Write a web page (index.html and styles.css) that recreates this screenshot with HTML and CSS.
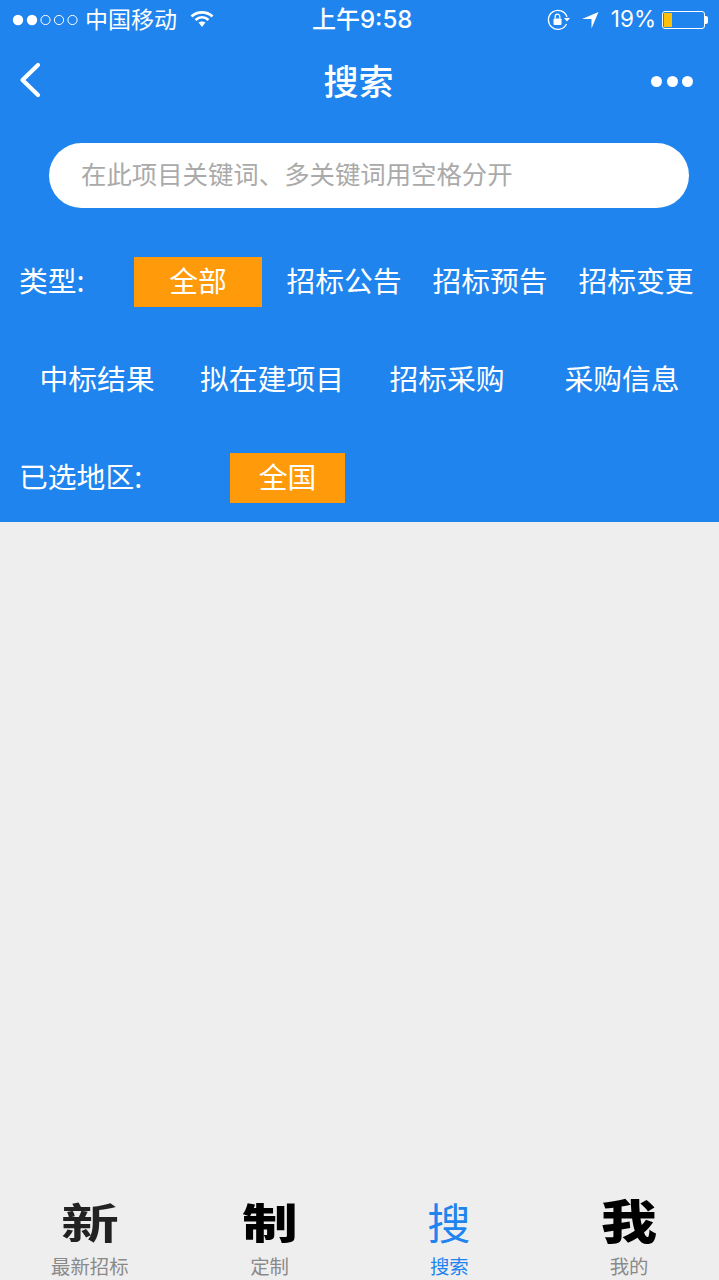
FILE: index.html
```html
<!DOCTYPE html>
<html lang="zh-CN">
<head>
<meta charset="utf-8">
<title>搜索</title>
<link rel="stylesheet" href="styles.css">
</head>
<body>
<div class="app">
  <header class="top">
    <div class="status">
      <div class="status-side">
        <svg class="signal" width="66" height="14" viewBox="0 0 66 14"><circle cx="6" cy="7" r="5.2" fill="#fff"/><circle cx="20" cy="7" r="5.2" fill="#fff"/><circle cx="33.500" cy="7" r="4.600" fill="none" stroke="#fff" stroke-width="1"/><circle cx="47" cy="7" r="4.600" fill="none" stroke="#fff" stroke-width="1"/><circle cx="60.500" cy="7" r="4.600" fill="none" stroke="#fff" stroke-width="1"/></svg>
        <span class="carrier">中国移动</span>
        <svg class="wifi" width="24" height="18" viewBox="0 0 24 18"><path d="M1.500 6.500C7.500 1 16.500 1 22.500 6.500" fill="none" stroke="#fff" stroke-width="2.800"/><path d="M5.500 10C9.500 6.500 14.500 6.500 18.500 10" fill="none" stroke="#fff" stroke-width="2.800"/><path d="M8.500 12.500C10.500 11 13.500 11 15.500 12.500L12 17Z" fill="#fff"/></svg>
      </div>
      <div class="clock">上午9:58</div>
      <div class="status-side">
        <svg class="lock" width="24" height="22" viewBox="0 0 24 22"><path d="M19.500 15A9.500 9.500 0 1 1 20 8" fill="none" stroke="#fff" stroke-width="1.300"/><path d="M17 9h6l-3 3.500Z" fill="#fff"/><rect x="6.500" y="9.500" width="8" height="6.500" rx="1" fill="#fff"/><path d="M8.200 9.500V7.500a2.300 2.300 0 0 1 4.600 0V9.500" fill="none" stroke="#fff" stroke-width="1.300"/></svg>
        <svg class="arrow" width="18" height="18" viewBox="0 0 18 18"><path d="M17.500 1L10.500 17.500V8H1Z" fill="#fff"/></svg>
        <span class="pct">19%</span>
        <div class="battery"><div class="battery-fill"></div></div>
      </div>
    </div>
    <nav class="nav">
      <svg class="back" width="24" height="36" viewBox="0 0 24 36"><path d="M20 3L4.500 18L20 33" fill="none" stroke="#fff" stroke-width="4.200" stroke-linecap="round" stroke-linejoin="round"/></svg>
      <h1 class="title">搜索</h1>
      <div class="more"><i></i><i></i><i></i></div>
    </nav>
    <div class="search"><span>在此项目关键词、多关键词用空格分开</span></div>
    <div class="filters">
      <div class="row">
        <span class="label label-type">类型:</span>
        <span class="chip chip-all">全部</span>
        <span class="opt">招标公告</span>
        <span class="opt">招标预告</span>
        <span class="opt">招标变更</span>
      </div>
      <div class="row row-more">
        <span class="cell">中标结果</span>
        <span class="cell">拟在建项目</span>
        <span class="cell">招标采购</span>
        <span class="cell">采购信息</span>
      </div>
      <div class="row">
        <span class="label label-area">已选地区:</span>
        <span class="chip chip-area">全国</span>
      </div>
    </div>
  </header>
  <main class="content"></main>
  <footer class="tabs">
    <div class="tab"><div class="glyph-box"><span class="glyph g-new">新</span></div><span class="tab-label">最新招标</span></div>
    <div class="tab"><div class="glyph-box"><span class="glyph g-make">制</span></div><span class="tab-label">定制</span></div>
    <div class="tab tab-active"><div class="glyph-box"><span class="glyph g-search">搜</span></div><span class="tab-label">搜索</span></div>
    <div class="tab"><div class="glyph-box"><span class="glyph g-me">我</span></div><span class="tab-label">我的</span></div>
  </footer>
</div>
</body>
</html>
```
FILE: styles.css
```css
* { box-sizing: border-box; margin: 0; padding: 0; }
html, body { height: 100%; }
body {
  background: #eeeeee;
  font-family: "Noto Sans CJK SC", "Noto Sans", sans-serif;
  overflow: hidden;
}
.app { width: 719px; height: 1280px; display: flex; flex-direction: column; }
.top { background: #1f84ee; color: #fff; height: 522px; }
.status {
  height: 40px;
  display: flex;
  align-items: center;
  justify-content: space-between;
  padding: 0 14px 0 12px;
  position: relative;
}
.status-side { display: flex; align-items: center; }
.signal { margin-right: 7px; }
.carrier { font-size: 23px; line-height: 36px; padding-bottom: 4px; margin-right: 13px; font-weight: 400; }
.wifi { margin-top: -3px; }
.clock {
  position: absolute;
  left: 312px;
  top: 0;
  font: 500 24px/39px "Inter", "Noto Sans CJK SC", sans-serif;
}
.lock { margin-top: -1px; }
.arrow { margin: 0 12px 0 10px; }
.pct { font: 400 22.500px/38px "Inter", sans-serif; padding-bottom: 2px; margin-right: 6px; }
.battery {
  width: 43px;
  height: 18px;
  border: 1px solid #fff;
  border-radius: 3px;
  padding: 1px;
  position: relative;
}
.battery::after {
  content: "";
  position: absolute;
  right: -4px;
  top: 4px;
  width: 3px;
  height: 8px;
  background: #fff;
  border-radius: 0 2px 2px 0;
}
.battery-fill { width: 8px; height: 100%; background: #ffc107; }
.nav {
  height: 80px;
  display: flex;
  align-items: center;
  justify-content: space-between;
  padding: 0 26px 0 18px;
  position: relative;
}
.title {
  position: absolute;
  left: 0;
  right: 2px;
  text-align: center;
  font-size: 35px;
  font-weight: 500;
  line-height: 78px;
}
.more { display: flex; gap: 4.500px; margin-top: 2px; }
.more i { width: 11px; height: 11px; border-radius: 50%; background: #fff; display: block; }
.search {
  margin: 23px 30px 0 49px;
  height: 65px;
  border-radius: 33px;
  background: #fff;
  color: #aaaaaa;
  padding-left: 32px;
  font-size: 25.400px;
  line-height: 61px;
  font-weight: 400;
}
.filters {
  margin-top: 49px;
  display: flex;
  flex-direction: column;
  gap: 48px;
  font-size: 28.800px;
  font-weight: 400;
}
.row { height: 50px; display: flex; align-items: center; line-height: 46px; }
.row span { padding-bottom: 4px; }
.label { padding-left: 19px; }
.label-type { width: 134px; }
.label-area { width: 230px; }
.chip { background: #ff9a0a; height: 50px; text-align: center; }
.chip-all { width: 128px; margin-right: 9px; }
.chip-area { width: 115px; }
.opt { width: 146px; text-align: center; }
.row-more { padding-left: 9.500px; }
.cell { width: 175px; text-align: center; }
.content { flex: 1; }
.tabs { height: 90px; display: grid; grid-template-columns: repeat(4, 1fr); }
.tab { display: flex; flex-direction: column; align-items: center; color: #8a8a8a; }
.glyph-box { height: 63px; display: flex; align-items: center; justify-content: center; }
.glyph { line-height: 44px; font-size: 42px; color: #000; display: block; }
.g-new { font-weight: 700; color: #222; transform: translateY(-1px) scale(1.38, 1); }
.g-make { font-weight: 900; transform: translateY(-1px) scale(1.32, 1); }
.g-me { font-weight: 900; font-size: 44px; transform: translateY(-3px) scale(1.27, 1.06); }
.g-search { font-weight: 400; color: #1f84ee; transform: scale(1.03, 1.02); }
.tab-label { font-size: 19.400px; line-height: 26px; font-weight: 400; }
.tab-active .tab-label { color: #1f84ee; }
```
